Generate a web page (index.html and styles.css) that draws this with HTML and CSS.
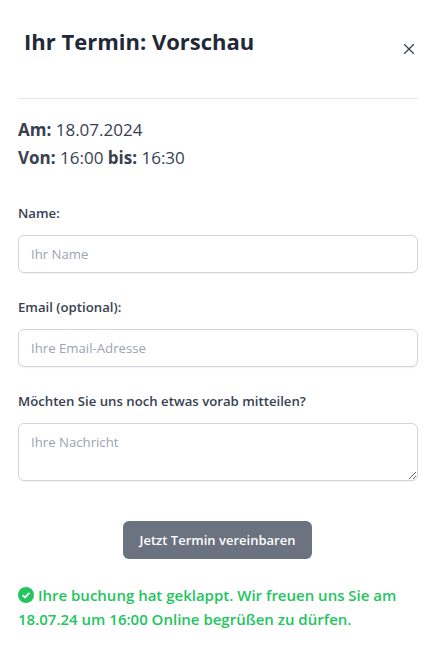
FILE: index.html
```html
<!DOCTYPE html>
<html lang="de">
<head>
    <meta charset="UTF-8">
    <title>Ihr Termin: Vorschau</title>
    <link rel="stylesheet" href="styles.css">
</head>
<body>
<div class="modal">
    <div class="modal-head">
        <h2 class="modal-title">Ihr Termin: Vorschau</h2>
        <button class="close" type="button" aria-label="Schließen">
            <svg width="12" height="12" viewBox="0 0 12 12"><path d="M1.2 1.2 10.8 10.8M10.8 1.2 1.2 10.8" stroke="#374151" stroke-width="1.3" fill="none"/></svg>
        </button>
    </div>
    <div class="summary">
        <p><b>Am:</b> 18.07.2024</p>
        <p><b>Von:</b> 16:00 <b>bis:</b> 16:30</p>
    </div>
    <form class="form">
        <div class="field">
            <label for="name">Name:</label>
            <input id="name" type="text" placeholder="Ihr Name">
        </div>
        <div class="field">
            <label for="email">Email (optional):</label>
            <input id="email" type="text" placeholder="Ihre Email-Adresse">
        </div>
        <div class="field">
            <label for="msg">Möchten Sie uns noch etwas vorab mitteilen?</label>
            <textarea id="msg" placeholder="Ihre Nachricht"></textarea>
        </div>
        <div class="actions">
            <button class="submit" type="button">Jetzt Termin vereinbaren</button>
        </div>
    </form>
    <p class="success">
        <svg class="check" width="16" height="16" viewBox="0 0 16 16"><circle cx="8" cy="8" r="8" fill="#22c55e"/><path d="M4.6 8.2 7 10.5 11.4 5.9" stroke="#fff" stroke-width="1.9" fill="none"/></svg>
        Ihre buchung hat geklappt. Wir freuen uns Sie am 18.07.24 um 16:00 Online begrüßen zu dürfen.
    </p>
</div>
</body>
</html>
```

FILE: styles.css
```css
* {
    box-sizing: border-box;
    margin: 0;
    padding: 0;
}
body {
    background: #fff;
    font-family: "Open Sans", "Noto Sans", sans-serif;
    color: #374151;
}
.modal {
    padding: 24px 21px 0 18px;
}
.modal-head {
    display: flex;
    justify-content: space-between;
    height: 75px;
    border-bottom: 1px solid #e5e7eb;
}
.modal-title {
    margin: 2px 0 0 6px;
    font-size: 22px;
    line-height: 30px;
    font-weight: 700;
    color: #1f2937;
}
.close {
    width: 12px;
    height: 12px;
    margin: 19px 3px 0 0;
    border: 0;
    background: none;
    display: block;
}
.close svg {
    display: block;
}
.summary {
    margin-top: 17px;
    font-size: 17px;
    line-height: 28px;
}
.form {
    margin-top: 31px;
}
.field {
    margin-bottom: 24px;
}
.field label {
    display: block;
    font-size: 13.2px;
    line-height: 20px;
    font-weight: 600;
    margin-bottom: 12px;
}
.field input,
.field textarea {
    display: block;
    width: 400px;
    border: 1px solid #d1d5db;
    border-radius: 6px;
    background: #fff;
    box-shadow: 0 1px 2px rgba(0, 0, 0, .05);
    padding: 8px 12px;
    font-family: inherit;
    font-size: 13.2px;
    line-height: 20px;
    color: #374151;
    outline: none;
}
.field input {
    height: 38px;
}
.field textarea {
    height: 58px;
}
.field input::placeholder,
.field textarea::placeholder {
    color: #9ca3af;
}
.actions {
    padding-left: 105px;
    margin-top: 40px;
}
.submit {
    display: block;
    width: 189px;
    height: 38px;
    border: 0;
    border-radius: 6px;
    background: #6b7280;
    color: #fff;
    font-family: inherit;
    font-size: 13px;
    font-weight: 600;
}
.success {
    margin-top: 24px;
    width: 400px;
    font-size: 15px;
    line-height: 24px;
    font-weight: 600;
    color: #22c55e;
}
.check {
    vertical-align: -2px;
}
```
